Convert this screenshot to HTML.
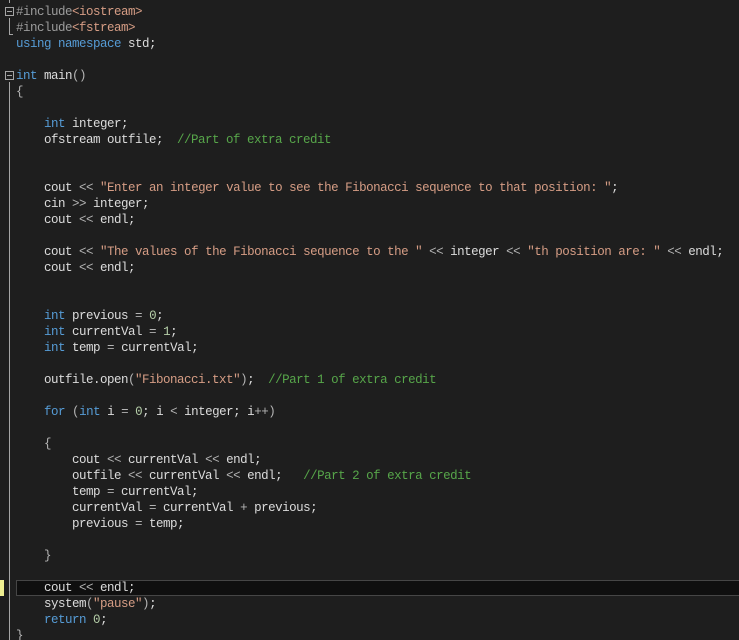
<!DOCTYPE html>
<html><head><meta charset="utf-8"><style>
html,body{margin:0;padding:0;background:#1e1e1e;width:739px;height:640px;overflow:hidden}
#ed{position:relative;width:739px;height:640px;font-family:"Liberation Mono",monospace;font-size:12.5px;letter-spacing:-0.5px;color:#dcdcdc}
.l{position:absolute;left:16px;height:16px;line-height:16px;white-space:pre}
.k{color:#569cd6}.s{color:#d69d85}.c{color:#57a64a}.p{color:#9b9b9b}.n{color:#b5cea8}.o{color:#b4b4b4}
.box{position:absolute;left:5px;width:7px;height:7px;border:1px solid #a5a5a5}
.box:after{content:"";position:absolute;left:1px;top:3px;width:5px;height:1px;background:#a5a5a5}
.vl{position:absolute;left:9px;width:1px;background:#a5a5a5}
.hl{position:absolute;left:16px;top:580px;width:723px;height:14px;border:1px solid #464646;background:#0f0f0f}
</style></head><body><div id="ed">
<div class="vl" style="top:0;height:3px"></div>
<div class="box" style="top:7px"></div>
<div class="vl" style="top:18px;height:17px"></div>
<div style="position:absolute;left:9px;top:34px;width:4px;height:1px;background:#a5a5a5"></div>
<div class="box" style="top:71px"></div>
<div class="vl" style="top:82px;height:558px"></div>
<div style="position:absolute;left:0;top:580px;width:4px;height:16px;background:#efef91"></div>
<div class="hl"></div>
<div id="code"></div>
</div>
<script>
var L=[
'<span class="p">#include</span><span class="s">&lt;iostream&gt;</span>',
'<span class="p">#include</span><span class="s">&lt;fstream&gt;</span>',
'<span class="k">using</span> <span class="k">namespace</span> std;',
'',
'<span class="k">int</span> main<span class="o">()</span>',
'<span class="o">{</span>',
'',
'    <span class="k">int</span> integer;',
'    ofstream outfile;  <span class="c">//Part of extra credit</span>',
'','',
'    cout <span class="o">&lt;&lt;</span> <span class="s">"Enter an integer value to see the Fibonacci sequence to that position: "</span>;',
'    cin <span class="o">&gt;&gt;</span> integer;',
'    cout <span class="o">&lt;&lt;</span> endl;',
'',
'    cout <span class="o">&lt;&lt;</span> <span class="s">"The values of the Fibonacci sequence to the "</span> <span class="o">&lt;&lt;</span> integer <span class="o">&lt;&lt;</span> <span class="s">"th position are: "</span> <span class="o">&lt;&lt;</span> endl;',
'    cout <span class="o">&lt;&lt;</span> endl;',
'','',
'    <span class="k">int</span> previous <span class="o">=</span> <span class="n">0</span>;',
'    <span class="k">int</span> currentVal <span class="o">=</span> <span class="n">1</span>;',
'    <span class="k">int</span> temp <span class="o">=</span> currentVal;',
'',
'    outfile.open<span class="o">(</span><span class="s">"Fibonacci.txt"</span><span class="o">)</span>;  <span class="c">//Part 1 of extra credit</span>',
'',
'    <span class="k">for</span> <span class="o">(</span><span class="k">int</span> i <span class="o">=</span> <span class="n">0</span>; i <span class="o">&lt;</span> integer; i<span class="o">++)</span>',
'',
'    <span class="o">{</span>',
'        cout <span class="o">&lt;&lt;</span> currentVal <span class="o">&lt;&lt;</span> endl;',
'        outfile <span class="o">&lt;&lt;</span> currentVal <span class="o">&lt;&lt;</span> endl;   <span class="c">//Part 2 of extra credit</span>',
'        temp <span class="o">=</span> currentVal;',
'        currentVal <span class="o">=</span> currentVal <span class="o">+</span> previous;',
'        previous <span class="o">=</span> temp;',
'',
'    <span class="o">}</span>',
'',
'    cout <span class="o">&lt;&lt;</span> endl;',
'    system<span class="o">(</span><span class="s">"pause"</span><span class="o">)</span>;',
'    <span class="k">return</span> <span class="n">0</span>;',
'<span class="o">}</span>'
];
var h='';for(var i=0;i<L.length;i++){h+='<div class="l" style="top:'+(4+16*i)+'px">'+L[i]+'</div>';}
document.getElementById('code').innerHTML=h;
</script>
</body></html>
